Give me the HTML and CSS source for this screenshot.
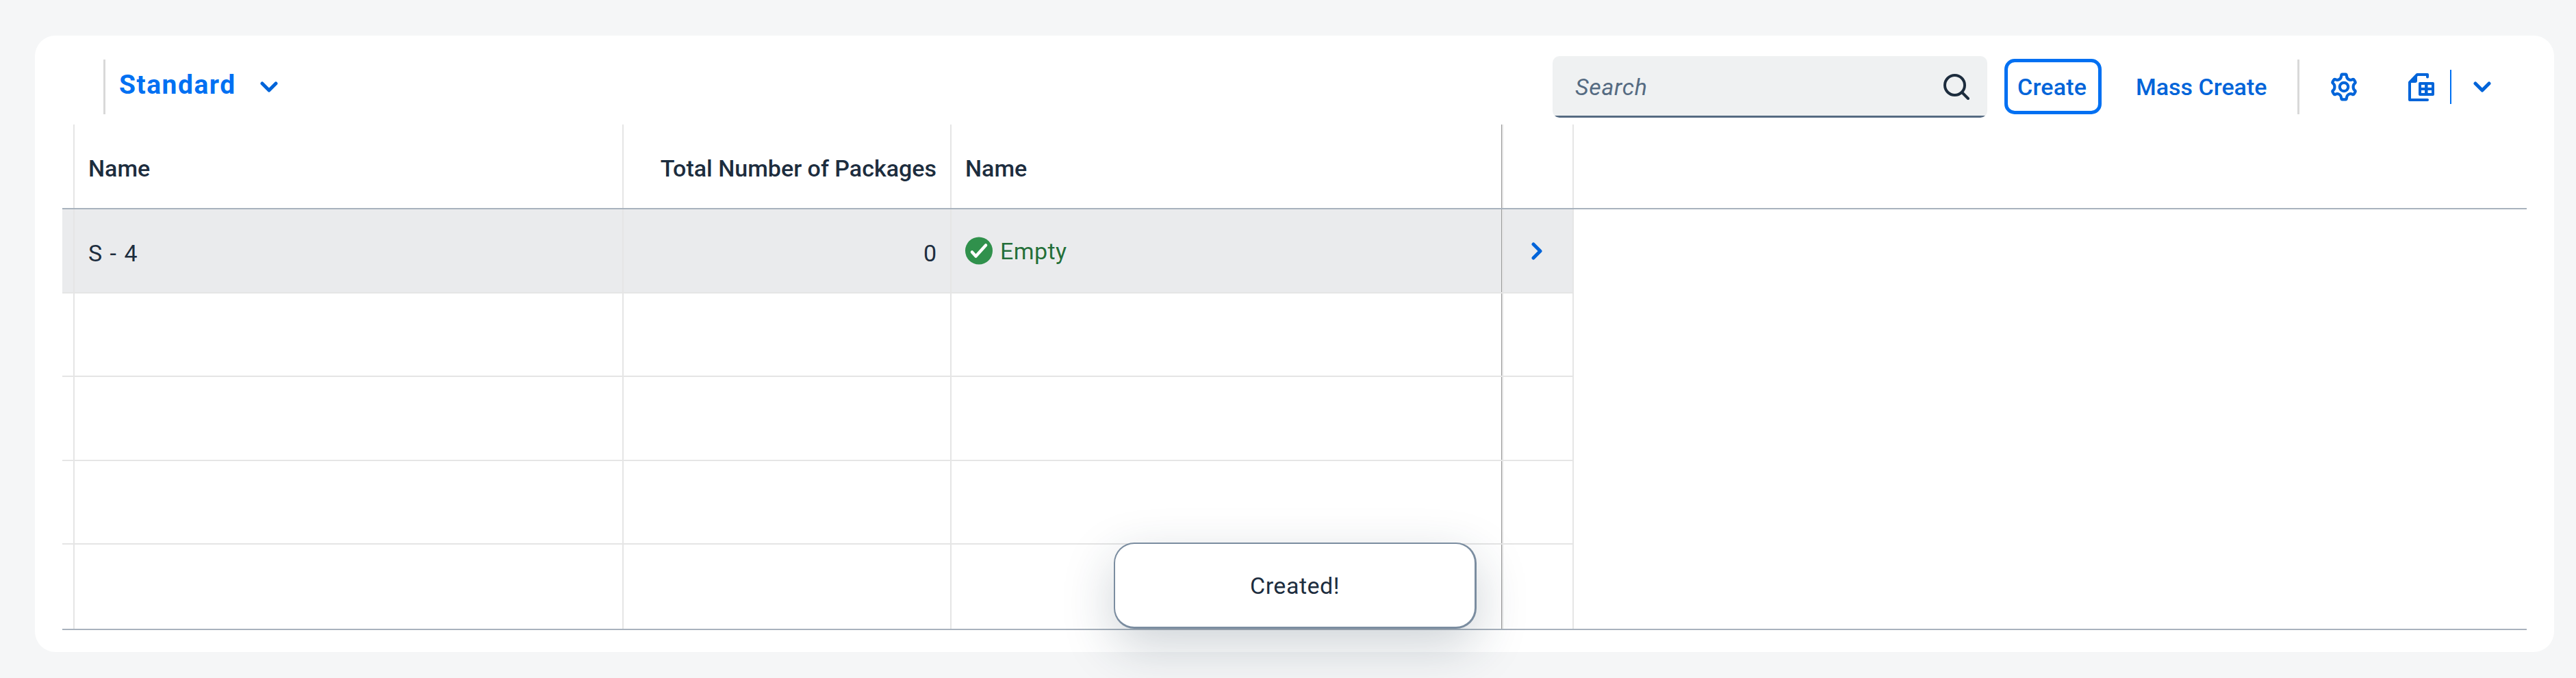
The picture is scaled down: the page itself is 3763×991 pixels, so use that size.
FILE: index.html
```html
<!DOCTYPE html>
<html lang="en">
<head>
<meta charset="utf-8">
<title>Packages</title>
<link rel="stylesheet" href="styles.css">
</head>
<body>
<main class="card">
  <header class="toolbar">
    <span class="separator"></span>
    <button class="variant"><span class="variant-title">Standard</span>
      <svg class="chevron" viewBox="0 0 26 16"><path d="M3 3l10 10L23 3"/></svg>
    </button>
    <div class="search">
      <span class="search-text">Search</span>
      <svg class="search-icon" viewBox="0 0 38 38"><circle cx="16.5" cy="16.5" r="14.5"/><path d="M27 27l9 9"/></svg>
    </div>
    <button class="btn btn-focused">Create</button>
    <button class="btn btn-mass">Mass Create</button>
    <span class="separator"></span>
    <svg class="gear" viewBox="-20 -21 40 42"><path d="M-2.500 -18.400H2.500Q3.600 -18.400 3.800 -16.500Q4.200 -11.500 8.500 -10.200Q10.500 -9.700 12.200 -10.800Q14 -11.700 15 -10L16.400 -7.500Q17.200 -6 15.400 -4.700Q13.600 -3.300 13.600 0Q13.600 3.300 15.400 4.700Q17.200 6 16.400 7.500L15 10Q14 11.700 12.200 10.800Q10.500 9.700 8.500 10.200Q4.200 11.500 3.800 16.500Q3.600 18.400 2.500 18.400H-2.500Q-3.600 18.400 -3.800 16.500Q-4.200 11.500 -8.500 10.200Q-10.500 9.700 -12.200 10.800Q-14 11.700 -15 10L-16.400 7.500Q-17.200 6 -15.400 4.700Q-13.600 3.300 -13.600 0Q-13.600 -3.300 -15.400 -4.700Q-17.200 -6 -16.400 -7.500L-15 -10Q-14 -11.700 -12.200 -10.800Q-10.500 -9.700 -8.500 -10.200Q-4.200 -11.500 -3.800 -16.500Q-3.600 -18.400 -2.500 -18.400Z"/><circle r="6.2"/></svg>
    <svg class="export" viewBox="0 0 38 41"><path class="line" d="M28 5.500V2H13L2 13.500V39H28"/><path class="fill" d="M13 1V11q0 3-3 3H1Z"/><path class="fill" fill-rule="evenodd" d="M17 13H36q2 0 2 2V31q0 2-2 2H17q-2 0-2-2V15q0-2 2-2ZM19 17v4h5v-4ZM28.500 17v4H34v-4ZM19 25v4h5v-4ZM28.500 25v4H34v-4Z"/></svg>
    <span class="split"></span>
    <svg class="chevron chevron-menu" viewBox="0 0 26 16"><path d="M3 3l10 10L23 3"/></svg>
  </header>
  <section class="table">
    <div class="row head">
      <div class="cell gutter"></div><div class="cell name">Name</div><div class="cell total">Total Number of Packages</div><div class="cell status">Name</div><div class="cell nav"></div>
    </div>
    <div class="body">
      <div class="row selected">
        <div class="cell gutter"></div><div class="cell name"><span class="item-id">S - 4</span></div><div class="cell total">0</div>
        <div class="cell status empty"><svg class="ok" viewBox="0 0 40 41"><circle cx="20" cy="20.500" r="20"/><path d="M10 22.500l5.500 6L30 12.500"/></svg><span class="state">Empty</span></div>
        <div class="cell nav"><svg class="go" viewBox="0 0 16 26"><path d="M3 3l10 10L3 23"/></svg></div>
      </div>
      <div class="row"><div class="cell gutter"></div><div class="cell name"></div><div class="cell total"></div><div class="cell status"></div><div class="cell nav"></div></div>
      <div class="row"><div class="cell gutter"></div><div class="cell name"></div><div class="cell total"></div><div class="cell status"></div><div class="cell nav"></div></div>
      <div class="row"><div class="cell gutter"></div><div class="cell name"></div><div class="cell total"></div><div class="cell status"></div><div class="cell nav"></div></div>
      <div class="row last"><div class="cell gutter"></div><div class="cell name"></div><div class="cell total"></div><div class="cell status"></div><div class="cell nav"></div></div>
    </div>
  </section>
</main>
<div class="toast">Created!</div>
</body>
</html>
```
FILE: styles.css
```css
* { box-sizing: border-box; }
body {
  margin: 0;
  height: 991px;
  padding: 52px 32px 38px 51px;
  overflow: hidden;
  background: #f5f6f7;
  color: #1d2d3e;
  font: 34px/40px Roboto, sans-serif;
}
.card {
  height: 901px;
  padding: 30px 40px 0;
  border-radius: 30px;
  background: #fff;
}
.toolbar { display: flex; align-items: center; height: 90px; padding-left: 60px; margin-bottom: 10px; }
.separator { width: 3px; height: 80px; background: #d9d9d9; }
button { margin: 0; padding: 0; border: 0; background: none; font: inherit; color: #0064d9; white-space: nowrap; }
svg { display: block; flex: none; fill: none; stroke: #0064d9; stroke-linecap: round; stroke-linejoin: round; }
.variant { display: flex; align-items: center; margin-left: 20px; }
.variant-title { width: 206px; padding-bottom: 7px; text-align: left; font-size: 39px; font-weight: 700; letter-spacing: 1.500px; color: #0070f2; }
.chevron { width: 26px; height: 16px; stroke-width: 5; }
.search {
  display: flex; align-items: center; justify-content: space-between;
  width: 635px; height: 90px; margin-left: auto; padding: 0 26px 0 33px;
  border-radius: 10px; background: linear-gradient(#556b82, #556b82) bottom / 100% 3px no-repeat #eff1f2;
}
.search-text { font-style: italic; letter-spacing: .7px; color: #556b82; }
.search-icon { width: 38px; height: 38px; stroke: #1d2d3e; stroke-width: 4; }
.btn { display: flex; align-items: center; height: 81px; margin-bottom: 1px; font-weight: 500; }
.btn-focused { width: 142px; margin-left: 25px; padding-left: 14px; border: 5px solid #0070f2; border-radius: 15px; letter-spacing: .2px; }
.btn-mass { width: 190px; margin: 0 46px 1px 50px; }
.gear { width: 40px; height: 42px; margin-left: 45px; stroke-width: 4.200; }
.export { width: 38px; height: 41px; margin-left: 74px; }
.export .line { stroke-width: 4; }
.export .fill { fill: #0064d9; stroke: none; }
.split { width: 2px; height: 50px; margin-left: 23px; background: #0070f2; }
.chevron-menu { margin: 0 52px 0 32px; }
.table { height: 739px; border-bottom: 2px solid #a8b2bd; }
.row { display: flex; height: 122.500px; }
.head { height: 124px; border-bottom: 2px solid #a8b2bd; font-weight: 500; }
.cell { display: flex; align-items: center; border-right: 2px solid #e5e5e5; white-space: nowrap; }
.head .cell { padding-top: 5px; }
.body .cell { border-bottom: 2px solid #e5e5e5; }
.body .last .cell { border-bottom: 0; }
.selected { background: #eaebed; width: 2208px; }
.gutter { width: 18px; }
.name { width: 802px; padding-left: 20px; }
.total { width: 479px; padding-right: 20px; justify-content: flex-end; }
.status { width: 806px; padding-left: 20px; box-shadow: inset -1px 0 #999; }
.nav { width: 103px; padding-left: 41px; }
.body .name, .body .total { padding-top: 7px; }
.item-id { letter-spacing: .5px; word-spacing: 2px; }
.empty { gap: 11px; color: #256f3a; }
.state { padding-top: 2px; letter-spacing: .4px; text-shadow: 0 0 2px #fff; }
.ok { width: 40px; height: 41px; }
.ok circle { fill: #30914c; stroke: none; }
.ok path { stroke: #fff; stroke-width: 4.500; }
.body .nav { padding-top: 2px; }
.go { width: 16px; height: 26px; stroke-width: 5; }
.toast {
  position: absolute; left: 1627px; top: 793px;
  display: flex; align-items: center; justify-content: center;
  width: 530px; height: 126px; padding-top: 1px; letter-spacing: .5px;
  border: 2px solid #7b8da0; border-right-width: 3px; border-bottom-width: 3px; border-radius: 30px; background: #fff;
  box-shadow: 0 25px 75px rgba(34, 53, 72, .22);
}
```
